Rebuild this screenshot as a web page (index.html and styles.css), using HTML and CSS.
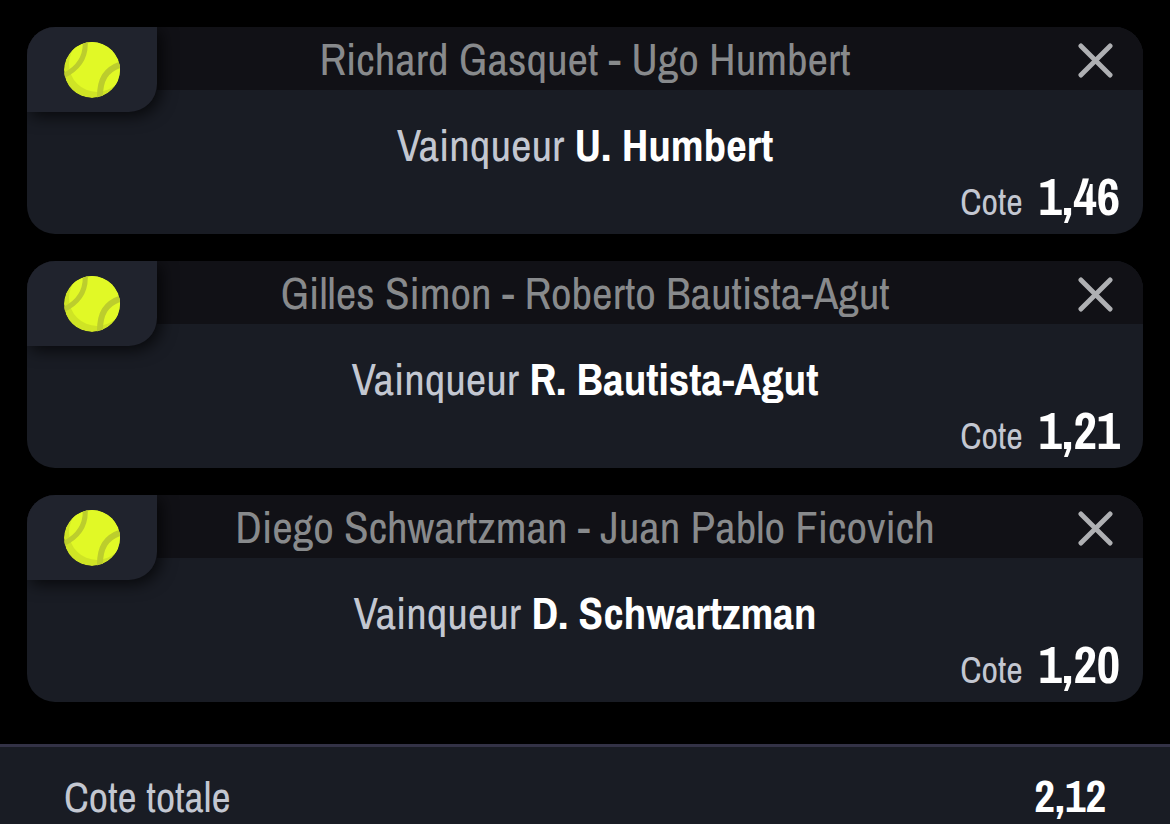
FILE: index.html
```html
<!DOCTYPE html>
<html lang="fr">
<head>
  <meta charset="UTF-8">
  <meta name="viewport" content="width=device-width, initial-scale=1">
  <title>Mon panier</title>
  <link rel="stylesheet" href="styles.css">
</head>
<body>

  <!-- shared icons -->
  <svg class="sprite" aria-hidden="true">
    <symbol id="tennis" viewBox="0 0 56 56">
      <clipPath id="ball"><circle cx="28" cy="28" r="28"/></clipPath>
      <g clip-path="url(#ball)">
        <circle cx="28" cy="28" r="28" fill="#cfe425"/>
        <circle cx="33" cy="22" r="28" fill="#e1f926"/>
        <path d="M21 -3C23 15 15 27 -3 35" fill="none" stroke="#bccd2d" stroke-width="5"/>
        <path d="M58 22C42 27 35 37 36 59" fill="none" stroke="#bccd2d" stroke-width="6"/>
      </g>
    </symbol>
    <symbol id="close" viewBox="0 0 36 36">
      <path d="M3 3L33 33M33 3L3 33" fill="none" stroke="currentColor" stroke-width="5" stroke-linecap="round"/>
    </symbol>
  </svg>

  <main class="bets">
    <article class="bet">
      <div class="sport"><svg class="ball"><use href="#tennis"/></svg></div>
      <header class="bet-header">
        <h2 class="match">Richard Gasquet - Ugo Humbert</h2>
        <button class="remove" type="button" aria-label="Supprimer"><svg class="cross"><use href="#close"/></svg></button>
      </header>
      <p class="pick">Vainqueur <strong>U. Humbert</strong></p>
      <p class="odds">Cote <strong>1,46</strong></p>
    </article>

    <article class="bet">
      <div class="sport"><svg class="ball"><use href="#tennis"/></svg></div>
      <header class="bet-header">
        <h2 class="match">Gilles Simon - Roberto Bautista-Agut</h2>
        <button class="remove" type="button" aria-label="Supprimer"><svg class="cross"><use href="#close"/></svg></button>
      </header>
      <p class="pick">Vainqueur <strong>R. Bautista-Agut</strong></p>
      <p class="odds">Cote <strong>1,21</strong></p>
    </article>

    <article class="bet">
      <div class="sport"><svg class="ball"><use href="#tennis"/></svg></div>
      <header class="bet-header">
        <h2 class="match">Diego Schwartzman - Juan Pablo Ficovich</h2>
        <button class="remove" type="button" aria-label="Supprimer"><svg class="cross"><use href="#close"/></svg></button>
      </header>
      <p class="pick">Vainqueur <strong>D. Schwartzman</strong></p>
      <p class="odds">Cote <strong>1,20</strong></p>
    </article>
  </main>

  <footer class="total">
    <span>Cote totale</span>
    <strong>2,12</strong>
  </footer>

</body>
</html>
```
FILE: styles.css
```css
* {
  box-sizing: border-box;
}

body {
  margin: 0;
  min-height: 100vh;
  display: flex;
  flex-direction: column;
  background: #000;
  color: #c3c7d1;
  font-family: 'Archivo Narrow', 'Liberation Sans Narrow', 'Liberation Sans', sans-serif;
  font-size: 45px;
  line-height: 56px;
}

h2, p {
  margin: 0;
}

strong {
  color: #fff;
  font-weight: 700;
}

.sprite {
  position: absolute;
  width: 0;
  height: 0;
}

.bets {
  display: flex;
  flex-direction: column;
  gap: 27px;
  padding: 27px 27px 42px;
}

.bet {
  position: relative;
  overflow: hidden;
  padding-bottom: 8px;
  border-radius: 28px;
  background: #191c24;
}

/* sport badge laid over the top left corner */
.sport {
  position: absolute;
  top: 0;
  left: 0;
  display: flex;
  align-items: center;
  justify-content: center;
  width: 130px;
  height: 85px;
  border-bottom-right-radius: 28px;
  background: #20232d;
  box-shadow: 4px 4px 16px rgba(0, 0, 0, 0.7);
}

.ball {
  width: 56px;
  height: 56px;
}

.bet-header {
  display: grid;
  grid-template-columns: 130px 1fr 130px;
  align-items: center;
  height: 63px;
  background: #111116;
}

.match {
  grid-column: 2;
  color: #888a8c;
  font-size: 45px;
  font-weight: 400;
  text-align: center;
  white-space: nowrap;
}

.remove {
  display: flex;
  justify-self: end;
  margin-right: 20px;
  padding: 14px 10px 10px;
  border: none;
  background: none;
  color: #afb0b3;
  cursor: pointer;
}

.cross {
  width: 35px;
  height: 35px;
}

.pick {
  padding-top: 27px;
  text-align: center;
}

.odds {
  display: flex;
  align-items: baseline;
  justify-content: flex-end;
  gap: 16px;
  padding-right: 23px;
  font-size: 36px;
  line-height: 48px;
}

.odds strong {
  font-size: 51px;
}

.total {
  flex: 1;
  display: flex;
  align-items: baseline;
  justify-content: space-between;
  padding: 22px 64px 0;
  border-top: 3px solid #333246;
  background: #191c24;
  font-size: 42px;
  line-height: 54px;
}

.total strong {
  font-size: 45px;
}
```
